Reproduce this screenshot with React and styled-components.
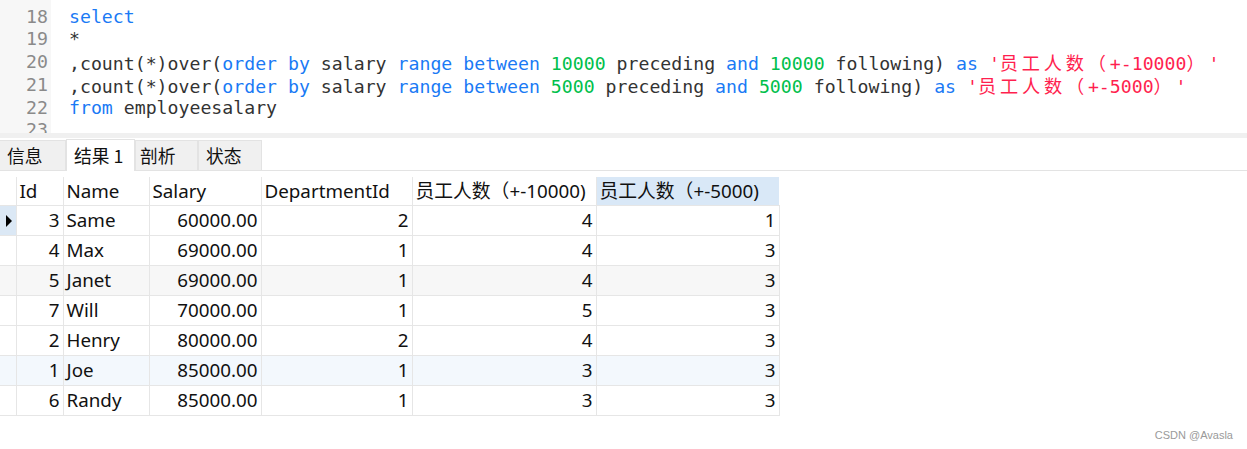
import React from "react";
import styled, { createGlobalStyle } from "styled-components";

const Global = createGlobalStyle`
  html, body { margin: 0; padding: 0; background: #fff; }
  body { width: 1247px; height: 449px; overflow: hidden; }
`;

const Page = styled.div`
  position: relative;
  width: 1247px;
  height: 449px;
  background: #fff;
  display: flex;
  flex-direction: column;
  font-family: "Noto Sans", "Noto Sans CJK SC", sans-serif;
`;

const Editor = styled.div`
  height: 133px;
  display: flex;
  overflow: hidden;
`;

const Gutter = styled.div`
  width: 51px;
  background: #f7f7f7;
  padding-top: 5.5px;
  box-sizing: border-box;
  display: flex;
  flex-direction: column;
  align-items: flex-end;
`;

const LineNo = styled.div`
  height: 22.8px;
  line-height: 22.8px;
  padding-right: 3px;
  font-family: "DejaVu Sans Mono", "Liberation Mono", monospace;
  font-size: 18.2px;
  color: #8a8a8a;
`;

const Code = styled.div`
  padding-top: 5.5px;
  padding-left: 18px;
  display: flex;
  flex-direction: column;
`;

const CodeLine = styled.div`
  height: 22.8px;
  line-height: 22.8px;
  white-space: pre;
  font-family: "DejaVu Sans Mono", "Liberation Mono", monospace;
  font-size: 18.2px;
  color: #333;
`;

const colors = { kw: "#1a7af5", num: "#00c04b", str: "#ff1f4f", txt: "#333" };

const Tok = styled.span`
  color: ${(p) => colors[p.$t || "txt"]};
`;

const Cjk = styled.span`
  font-family: "Noto Sans CJK SC", sans-serif;
  letter-spacing: 3.8px;
`;

const Separator = styled.div`
  height: 5px;
  background: #f0f0f0;
`;

const TabBar = styled.div`
  height: 32px;
  display: flex;
  align-items: flex-end;
  border-bottom: 1px solid #e3e3e3;
`;

const Tab = styled.div`
  width: ${(p) => p.$w}px;
  height: ${(p) => (p.$active ? 32 : 30)}px;
  margin-bottom: ${(p) => (p.$active ? -1 : 0)}px;
  box-sizing: border-box;
  padding-left: ${(p) => p.$pl}px;
  padding-bottom: 2px;
  display: flex;
  align-items: center;
  background: ${(p) => (p.$active ? "#fff" : "#f0f0f0")};
  border: 1px solid #e3e3e3;
  border-bottom: none;
  border-left: ${(p) => (p.$first ? "none" : "1px solid #e3e3e3")};
  font-family: "Noto Sans CJK SC", sans-serif;
  font-size: 17.8px;
  color: #111;
  white-space: pre;
`;

const Grid = styled.table`
  margin-top: 6px;
  border-collapse: collapse;
  table-layout: fixed;
  width: 779px;
  font-family: "Noto Sans", "Noto Sans CJK SC", sans-serif;
  font-size: 18.8px;
  color: #111;
`;

const Th = styled.th`
  height: 28px;
  padding: 0 0 0 3px;
  text-align: left;
  font-weight: normal;
  white-space: nowrap;
  overflow: hidden;
  background: ${(p) => (p.$sel ? "#d9e8f7" : "#fff")};
  border-left: 1px solid #e6e6e6;
  border-bottom: 1px solid #e6e6e6;
  line-height: 28px;
`;

const Row = styled.tr`
  background: ${(p) => p.$bg || "#fff"};
`;

const Td = styled.td`
  height: 29px;
  padding: 0 ${(p) => (p.$right ? 3 : 0)}px 0 ${(p) => (p.$right ? 0 : 3)}px;
  text-align: ${(p) => (p.$right ? "right" : "left")};
  border: 1px solid #e6e6e6;
  border-top: none;
  white-space: nowrap;
  line-height: 29px;
`;

const Indicator = styled.td`
  height: 29px;
  padding: 0;
  background: ${(p) => (p.$cur ? "#dbe8f5" : "transparent")};
  border-bottom: 1px solid #e6e6e6;
  border-right: 1px solid #e6e6e6;
  vertical-align: middle;
`;

const Marker = styled.svg`
  display: block;
  margin-left: 6px;
`;

const Watermark = styled.div`
  position: absolute;
  right: 14px;
  bottom: 8px;
  font-family: "Liberation Sans", Arial, sans-serif;
  font-size: 11px;
  color: #9a9a9a;
`;

const codeLines = [
  [["kw", "select"]],
  [["txt", "*"]],
  [
    ["txt", ",count(*)over("],
    ["kw", "order by"],
    ["txt", " salary "],
    ["kw", "range between"],
    ["txt", " "],
    ["num", "10000"],
    ["txt", " preceding "],
    ["kw", "and"],
    ["txt", " "],
    ["num", "10000"],
    ["txt", " following) "],
    ["kw", "as"],
    ["txt", " "],
    ["str", "'"],
    ["strc", "员工人数（"],
    ["str", "+-10000"],
    ["strc", "）"],
    ["str", "'"],
  ],
  [
    ["txt", ",count(*)over("],
    ["kw", "order by"],
    ["txt", " salary "],
    ["kw", "range between"],
    ["txt", " "],
    ["num", "5000"],
    ["txt", " preceding "],
    ["kw", "and"],
    ["txt", " "],
    ["num", "5000"],
    ["txt", " following) "],
    ["kw", "as"],
    ["txt", " "],
    ["str", "'"],
    ["strc", "员工人数（"],
    ["str", "+-5000"],
    ["strc", "）"],
    ["str", "'"],
  ],
  [["kw", "from"], ["txt", " employeesalary"]],
  [["txt", ""]],
];

const tabs = [
  { label: "信息", w: 66, pl: 7 },
  { label: "结果 1", w: 69, pl: 7, active: true },
  { label: "剖析", w: 63, pl: 4 },
  { label: "状态", w: 64, pl: 7 },
];

const cols = [16, 47, 86, 112, 151, 184, 183];

const rows = [
  { id: 3, name: "Same", sal: "60000.00", d: 2, a: 4, b: 1, cur: true },
  { id: 4, name: "Max", sal: "69000.00", d: 1, a: 4, b: 3 },
  { id: 5, name: "Janet", sal: "69000.00", d: 1, a: 4, b: 3, bg: "#f7f7f7" },
  { id: 7, name: "Will", sal: "70000.00", d: 1, a: 5, b: 3 },
  { id: 2, name: "Henry", sal: "80000.00", d: 2, a: 4, b: 3 },
  { id: 1, name: "Joe", sal: "85000.00", d: 1, a: 3, b: 3, bg: "#f3f8fd" },
  { id: 6, name: "Randy", sal: "85000.00", d: 1, a: 3, b: 3 },
];

export default function App() {
  return (
    <Page>
      <Global />
      <Editor>
        <Gutter>
          {[18, 19, 20, 21, 22, 23].map((n) => (
            <LineNo key={n}>{n}</LineNo>
          ))}
        </Gutter>
        <Code>
          {codeLines.map((line, i) => (
            <CodeLine key={i}>
              {line.map(([t, s], j) =>
                t === "strc" ? (
                  <Tok key={j} $t="str">
                    <Cjk>{s}</Cjk>
                  </Tok>
                ) : (
                  <Tok key={j} $t={t}>
                    {s}
                  </Tok>
                )
              )}
            </CodeLine>
          ))}
        </Code>
      </Editor>
      <Separator />
      <TabBar>
        {tabs.map((t, i) => (
          <Tab key={t.label} $w={t.w} $pl={t.pl} $active={t.active} $first={i === 0}>
            {t.label}
          </Tab>
        ))}
      </TabBar>
      <Grid>
        <colgroup>
          {cols.map((w, i) => (
            <col key={i} style={{ width: w }} />
          ))}
        </colgroup>
        <thead>
          <tr>
            <Th style={{ borderLeft: "none" }} />
            <Th>Id</Th>
            <Th>Name</Th>
            <Th>Salary</Th>
            <Th>DepartmentId</Th>
            <Th>员工人数（+-10000)</Th>
            <Th $sel>员工人数（+-5000)</Th>
          </tr>
        </thead>
        <tbody>
          {rows.map((r) => (
            <Row key={r.id} $bg={r.bg}>
              <Indicator $cur={r.cur}>
                {r.cur && (
                  <Marker width="6" height="12" viewBox="0 0 6 12">
                    <polygon points="0,0 6,6 0,12" fill="#000" />
                  </Marker>
                )}
              </Indicator>
              <Td $right>{r.id}</Td>
              <Td>{r.name}</Td>
              <Td $right>{r.sal}</Td>
              <Td $right>{r.d}</Td>
              <Td $right>{r.a}</Td>
              <Td $right>{r.b}</Td>
            </Row>
          ))}
        </tbody>
      </Grid>
      <Watermark>CSDN @Avasla</Watermark>
    </Page>
  );
}
